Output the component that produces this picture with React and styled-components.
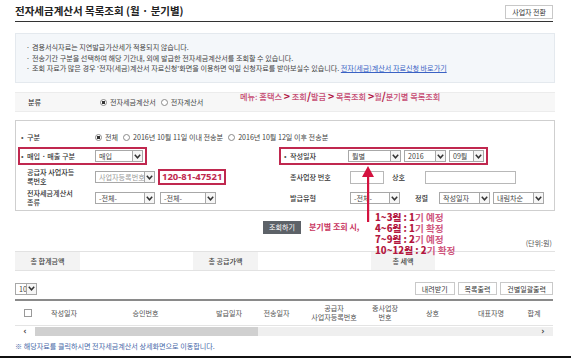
import React from 'react';
import styled, { createGlobalStyle } from 'styled-components';

const GlobalStyle = createGlobalStyle`
  html, body { margin: 0; padding: 0; background: #fff; }
  body {
    font-family: "Noto Sans CJK KR", "Noto Sans", sans-serif;
    font-size: 7.1px;
    color: #333;
  }
  * { box-sizing: border-box; }
`;

const RED = '#c0284f';

const Chevron = () => (
  <svg width="7" height="5" viewBox="0 0 7 5">
    <polyline points="0.8,0.8 3.5,3.8 6.2,0.8" fill="none" stroke="#333" strokeWidth="1.5" />
  </svg>
);

const Select = ({ width, children, muted }) => (
  <SelectBox $w={width}>
    <SelectText $muted={muted}>{children}</SelectText>
    <ArrowBox>
      <Chevron />
    </ArrowBox>
  </SelectBox>
);

const Radio = ({ checked, children }) => (
  <RadioItem>
    <RadioDot $checked={checked} />
    {children}
  </RadioItem>
);

const App = () => {
  return (
    <Page>
      <GlobalStyle />
      <Content>
        <Header>
          <Title>전자세금계산서 목록조회 (월 · 분기별)</Title>
          <SwitchButton>사업자 전환</SwitchButton>
        </Header>

        <InfoBox>
          <InfoLine>겸용서식자료는 지연발급가산세가 적용되지 않습니다.</InfoLine>
          <InfoLine>전송기간 구분을 선택하여 해당 기간내, 외에 발급한 전자세금계산서를 조회할 수 있습니다.</InfoLine>
          <InfoLine>
            조회 자료가 많은 경우 '전자(세금)계산서 자료신청'화면을 이용하면 익일 신청자료를 받아보실수 있습니다.{' '}
            <InfoLink>전자(세금)계산서 자료신청 바로가기</InfoLink>
          </InfoLine>
        </InfoBox>

        <KindRow>
          <KindLabel>분류</KindLabel>
          <RadioGroup>
            <Radio checked>전자세금계산서</Radio>
            <Radio>전자계산서</Radio>
          </RadioGroup>
        </KindRow>

        <FormBox>
          <Field $span>
            <Label $w={74} $bullet>구분</Label>
            <RadioGroup>
              <Radio checked>전체</Radio>
              <Radio>2016년 10월 11일 이내 전송분</Radio>
              <Radio>2016년 10월 12일 이후 전송분</Radio>
            </RadioGroup>
          </Field>

          <Field $marked>
            <Label $w={74} $bullet>매입 · 매출 구분</Label>
            <Select width={48}>매입</Select>
          </Field>
          <Field $marked $right>
            <Label $w={64} $bullet>작성일자</Label>
            <Controls>
              <Select width={53}>월별</Select>
              <Select width={42}>2016</Select>
              <Select width={35}>09월</Select>
            </Controls>
          </Field>

          <Field>
            <Label $w={74}>
              공급자 사업자등<br />록번호
            </Label>
            <Controls>
              <Select width={60} muted>사업자등록번호</Select>
              <BizNumber>120-81-47521</BizNumber>
            </Controls>
          </Field>
          <Field $right>
            <Label $w={66}>종사업장 번호</Label>
            <Controls $gap={8}>
              <TextInput $w={34} />
              <InlineLabel $w={25}>상호</InlineLabel>
              <TextInput $w={91} />
            </Controls>
          </Field>

          <Field>
            <Label $w={74}>
              전자세금계산서<br />종류
            </Label>
            <Controls $gap={5}>
              <Select width={60}>-전체-</Select>
              <Select width={56}>-전체-</Select>
            </Controls>
          </Field>
          <Field $right>
            <Label $w={66}>발급유형</Label>
            <Controls>
              <Select width={50}>-전체-</Select>
              <InlineLabel $w={33} $pad={12}>정렬</InlineLabel>
              <Select width={51}>작성일자</Select>
              <Select width={51}>내림차순</Select>
            </Controls>
          </Field>
        </FormBox>

        <SearchRow>
          <SearchButton>조회하기</SearchButton>
        </SearchRow>

        <Unit>(단위:원)</Unit>

        <Totals>
          <TotalLabel>총 합계금액</TotalLabel>
          <TotalValue />
          <TotalLabel>총 공급가액</TotalLabel>
          <TotalValue />
          <TotalLabel>총 세액</TotalLabel>
          <TotalValue />
        </Totals>

        <ToolRow>
          <Select width={22}>10</Select>
          <ToolButtons>
            <ToolButton>내려받기</ToolButton>
            <ToolButton>목록출력</ToolButton>
            <ToolButton>건별일괄출력</ToolButton>
          </ToolButtons>
        </ToolRow>

        <TableWrap>
          <HeaderRow>
            <HeadCell $w={25}>
              <CheckBox />
            </HeadCell>
            <HeadCell $w={48}>작성일자</HeadCell>
            <HeadCell $w={115}>승인번호</HeadCell>
            <HeadCell $w={52}>발급일자</HeadCell>
            <HeadCell $w={43}>전송일자</HeadCell>
            <HeadCell $w={72}>
              공급자<br />사업자등록번호
            </HeadCell>
            <HeadCell $w={30}>
              종사업장<br />번호
            </HeadCell>
            <HeadCell $w={65}>상호</HeadCell>
            <HeadCell $w={52}>대표자명</HeadCell>
            <HeadCell $w={34}>합계</HeadCell>
          </HeaderRow>
          <ScrollBar>
            <ScrollArrow>‹</ScrollArrow>
            <ScrollThumb />
            <ScrollTrack>
              <ScrollArrow>›</ScrollArrow>
            </ScrollTrack>
          </ScrollBar>
        </TableWrap>

        <FootNote>※ 해당자료를 클릭하시면 전자세금계산서 상세화면으로 이동합니다.</FootNote>
      </Content>
      <BottomRule />

      <MenuNote>
        메뉴: 홈택스 <Sep>&gt;</Sep> 조회<Sep>/</Sep>발급 <Sep>&gt;</Sep> 목록조회 <Sep>&gt;</Sep>월<Sep>/</Sep>분기별 목록조회
      </MenuNote>
      <Arrow width="12" height="56" viewBox="0 0 12 56">
        <polygon points="6,0 0,11 12,11" fill="#d4123f" />
        <rect x="5" y="10" width="2.2" height="46" fill="#d4123f" />
      </Arrow>
      <QuarterNote>분기별 조회 시,</QuarterNote>
      <QuarterList>
        <li><b>1~3월 : 1</b>기 예정</li>
        <li><b>4~6월 : 1</b>기 확정</li>
        <li><b>7~9월 : 2</b>기 예정</li>
        <li><b>10~12월 : 2</b>기 확정</li>
      </QuarterList>
    </Page>
  );
};

export default App;

const Page = styled.div`
  position: relative;
  width: 571px;
  height: 359px;
  display: flex;
  flex-direction: column;
  overflow: hidden;
`;

const Content = styled.div`
  flex: 1;
  padding: 0 16px 0 15px;
`;

const Header = styled.div`
  height: 22px;
  display: flex;
  justify-content: space-between;
  align-items: flex-start;
  padding-top: 4px;
  margin-right: 2px;
  border-bottom: 1.5px solid #333;
`;

const Title = styled.h1`
  margin: 0;
  font-size: 10.5px;
  line-height: 13px;
  font-weight: 700;
  color: #222;
`;

const SwitchButton = styled.button`
  height: 14px;
  padding: 0 6px;
  margin-top: 1px;
  border: 1px solid #c8c8c8;
  background: #fff;
  font-family: inherit;
  font-size: 7px;
  color: #333;
`;

const InfoBox = styled.div`
  margin-top: 11px;
  height: 50px;
  padding: 8px 10px;
  background: #f4f7fa;
  border: 1px solid #e4e9ee;
  color: #444;
`;

const InfoLine = styled.div`
  line-height: 10.5px;
  white-space: nowrap;
  &::before {
    content: '·';
    display: inline-block;
    width: 6px;
  }
`;

const InfoLink = styled.span`
  color: #3a62c4;
  text-decoration: underline;
`;

const KindRow = styled.div`
  margin-top: 9px;
  height: 20px;
  display: flex;
  align-items: center;
  background: #f7f7f7;
  border-top: 1px solid #ececec;
  border-bottom: 1px solid #ececec;
`;

const KindLabel = styled.div`
  width: 85px;
  padding-left: 13px;
  font-weight: 500;
  color: #333;
`;

const RadioGroup = styled.div`
  display: flex;
  gap: 5px;
  color: #444;
`;

const RadioItem = styled.span`
  display: inline-flex;
  align-items: center;
  gap: 3px;
  white-space: nowrap;
`;

const RadioDot = styled.span`
  width: 7px;
  height: 7px;
  border-radius: 50%;
  border: 1px solid #8a8a8a;
  background: ${(p) => (p.$checked ? 'radial-gradient(circle, #333 0 1.6px, #fff 2px)' : '#fff')};
`;

const FormBox = styled.div`
  margin-top: 8px;
  border: 1px solid #cfcfcf;
  padding: 9px 0 3px;
  display: grid;
  grid-template-columns: 263px 1fr;
  grid-template-rows: 14px 18px 18px 18px;
  row-gap: 3px;
`;

const Field = styled.div`
  display: flex;
  align-items: center;
  justify-self: start;
  height: 100%;
  margin-left: ${(p) => (p.$right ? 0 : 2)}px;
  padding: 0 2px 0 ${(p) => (p.$right ? 3 : 1)}px;
  border: 2px solid ${(p) => (p.$marked ? RED : 'transparent')};
  grid-column: ${(p) => (p.$span ? '1 / -1' : 'auto')};
`;

const Label = styled.div`
  width: ${(p) => p.$w}px;
  flex-shrink: 0;
  padding-left: 6px;
  position: relative;
  line-height: 8.6px;
  font-weight: 500;
  color: #333;
  &::before {
    content: '${(p) => (p.$bullet ? '•' : '')}';
    position: absolute;
    left: 0;
    color: #555;
  }
`;

const Controls = styled.div`
  display: flex;
  align-items: center;
  gap: ${(p) => p.$gap ?? 3}px;
`;

const InlineLabel = styled.span`
  width: ${(p) => p.$w}px;
  padding-left: ${(p) => p.$pad ?? 0}px;
  font-weight: 500;
  color: #333;
`;

const SelectBox = styled.div`
  width: ${(p) => p.$w}px;
  height: 12px;
  display: flex;
  align-items: center;
  border: 1px solid #a8a8a8;
  background: #fff;
  flex-shrink: 0;
`;

const SelectText = styled.span`
  flex: 1;
  padding-left: 3px;
  line-height: 10px;
  white-space: nowrap;
  overflow: hidden;
  color: ${(p) => (p.$muted ? '#9a9a9a' : '#444')};
`;

const ArrowBox = styled.span`
  width: 10px;
  height: 10px;
  display: flex;
  align-items: center;
  justify-content: center;
  border-left: 1px solid #a8a8a8;
  background: #f6f6f6;
`;

const TextInput = styled.div`
  width: ${(p) => p.$w}px;
  height: 13px;
  border: 1px solid #b8b8b8;
  background: #fff;
`;

const BizNumber = styled.span`
  height: 16px;
  padding: 0 2px;
  border: 2px solid ${RED};
  font-family: "Noto Sans", sans-serif;
  font-size: 9.5px;
  font-weight: 700;
  line-height: 12px;
  color: ${RED};
`;

const SearchRow = styled.div`
  margin-top: 10px;
  display: flex;
  justify-content: center;
  padding-right: 6px;
`;

const SearchButton = styled.button`
  height: 13px;
  padding: 0 6px;
  border: none;
  background: #5d6268;
  color: #fff;
  font-family: inherit;
  font-size: 7px;
  line-height: 13px;
`;

const Unit = styled.div`
  margin-top: 4px;
  text-align: right;
  padding-right: 3px;
  line-height: 10px;
  color: #555;
`;

const Totals = styled.div`
  margin-top: 3px;
  height: 20px;
  display: grid;
  grid-template-columns: 65px 113px 65px 113px 64px 1fr;
  border-top: 1px solid #e2e2e2;
  border-bottom: 1px solid #e2e2e2;
`;

const TotalLabel = styled.div`
  display: flex;
  align-items: center;
  justify-content: center;
  background: #f3f3f3;
  font-weight: 500;
  color: #444;
`;

const TotalValue = styled.div`
  background: #fff;
`;

const ToolRow = styled.div`
  margin-top: 11px;
  height: 13px;
  display: flex;
  justify-content: space-between;
  align-items: center;
  margin-right: 2px;
`;

const ToolButtons = styled.div`
  display: flex;
  gap: 3px;
`;

const ToolButton = styled.button`
  height: 13px;
  padding: 0 6px;
  border: 1px solid #c9c9c9;
  background: #fff;
  font-family: inherit;
  font-size: 7px;
  color: #333;
`;

const TableWrap = styled.div`
  margin-top: 4px;
  margin-right: 2px;
  border-top: 2px solid #8a8a8a;
  overflow: hidden;
`;

const HeaderRow = styled.div`
  height: 25px;
  display: flex;
  align-items: center;
  border-bottom: 1px solid #e4e4e4;
`;

const HeadCell = styled.div`
  width: ${(p) => p.$w}px;
  flex-shrink: 0;
  display: flex;
  justify-content: center;
  text-align: center;
  line-height: 9px;
  color: #555;
`;

const CheckBox = styled.span`
  width: 8px;
  height: 8px;
  border: 1px solid #999;
  background: #fff;
`;

const ScrollBar = styled.div`
  margin-top: 1px;
  height: 9px;
  display: flex;
`;

const ScrollArrow = styled.span`
  width: 20px;
  font-family: "DejaVu Sans", sans-serif;
  font-size: 8px;
  line-height: 9px;
  font-weight: 700;
  text-align: center;
  color: #444;
`;

const ScrollThumb = styled.div`
  width: 223px;
  background: #d0d0d0;
`;

const ScrollTrack = styled.div`
  flex: 1;
  display: flex;
  justify-content: flex-end;
  background: #efefef;
`;

const FootNote = styled.div`
  margin-top: 6px;
  line-height: 9px;
  color: #4869a8;
`;

const BottomRule = styled.div`
  height: 2px;
  margin-bottom: 1px;
  background: #111;
`;

const MenuNote = styled.div`
  position: absolute;
  left: 240px;
  top: 91px;
  font-size: 8.2px;
  font-weight: 500;
  line-height: 10px;
  color: #c64a72;
  white-space: nowrap;
`;

const Sep = styled.span`
  font-size: 10.5px;
  font-weight: 700;
  color: #b0123f;
`;

const Arrow = styled.svg`
  position: absolute;
  left: 362px;
  top: 166px;
`;

const QuarterNote = styled.div`
  position: absolute;
  left: 309px;
  top: 222px;
  font-size: 8px;
  line-height: 10px;
  font-weight: 700;
  color: #c8345e;
`;

const QuarterList = styled.ul`
  position: absolute;
  left: 375px;
  top: 212px;
  margin: 0;
  padding: 0;
  list-style: none;
  font-size: 9.6px;
  line-height: 11px;
  font-weight: 700;
  color: #d0587e;
  white-space: nowrap;
  b {
    color: #b3173f;
  }
`;
